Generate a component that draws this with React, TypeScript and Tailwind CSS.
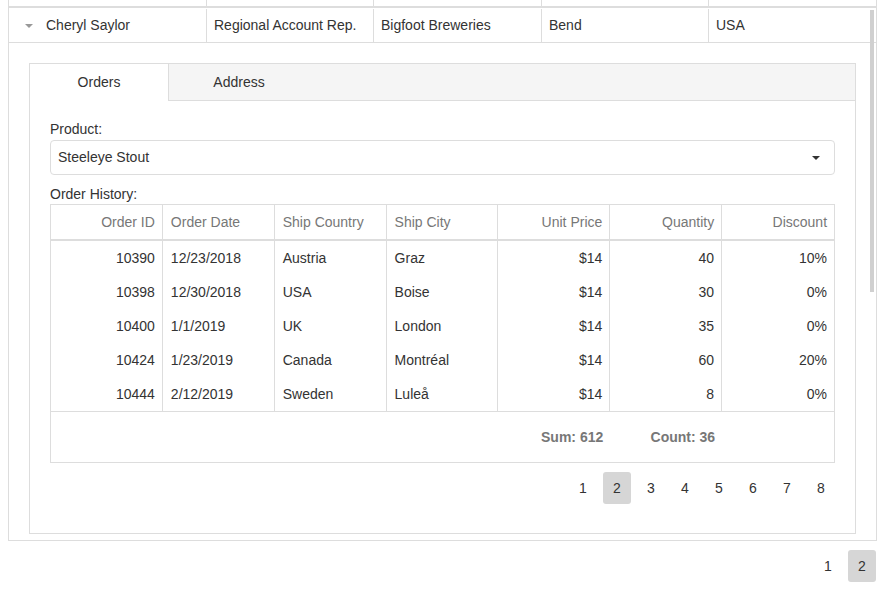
import React from "react";

const rows = [
  ["10390", "12/23/2018", "Austria", "Graz", "$14", "40", "10%"],
  ["10398", "12/30/2018", "USA", "Boise", "$14", "30", "0%"],
  ["10400", "1/1/2019", "UK", "London", "$14", "35", "0%"],
  ["10424", "1/23/2019", "Canada", "Montréal", "$14", "60", "20%"],
  ["10444", "2/12/2019", "Sweden", "Luleå", "$14", "8", "0%"],
];
const headers = ["Order ID", "Order Date", "Ship Country", "Ship City", "Unit Price", "Quantity", "Discount"];
const rightCols = [true, false, false, false, true, true, true];

export default function App() {
  return (
    <div className="relative w-[885px] h-[600px] bg-white text-[14px] text-[#333]" style={{ fontFamily: '"Liberation Sans", Arial, sans-serif' }}>
      <div className="ml-[8px] w-[869px] border-x border-[#ddd] border-b">
        {/* header row (cut off) */}
        <div className="flex h-[8px] border-b-2 border-[#ddd]">
          <div className="w-[198px] border-r border-[#ddd]" />
          <div className="w-[167px] border-r border-[#ddd]" />
          <div className="w-[168px] border-r border-[#ddd]" />
          <div className="w-[167px] border-r border-[#ddd]" />
          <div className="flex-1" />
        </div>
        {/* data row */}
        <div className="flex h-[35px] border-b border-[#ddd] items-stretch pt-px">
          <div className="w-[198px] border-r border-[#ddd] flex items-center">
            <div className="w-[37px] flex justify-center pl-[2px]">
              <div className="w-0 h-0 border-l-[4px] border-r-[4px] border-t-[4px] border-l-transparent border-r-transparent border-t-[#999]" />
            </div>
            <span>Cheryl Saylor</span>
          </div>
          <div className="w-[167px] border-r border-[#ddd] flex items-center px-[7px]">Regional Account Rep.</div>
          <div className="w-[168px] border-r border-[#ddd] flex items-center px-[7px]">Bigfoot Breweries</div>
          <div className="w-[167px] border-r border-[#ddd] flex items-center px-[7px]">Bend</div>
          <div className="flex-1 flex items-center px-[7px]">USA</div>
        </div>
        {/* detail row */}
        <div className="pt-[20px] pb-[6px] px-[20px]">
          <div className="border border-[#ddd] w-[827px]">
            <div className="flex h-[37px] bg-[#f5f5f5] border-b border-[#ddd]">
              <div className="w-[139px] bg-white border-r border-[#ddd] -mb-px flex items-center justify-center">Orders</div>
              <div className="w-[140px] flex items-center justify-center">Address</div>
            </div>
            <div className="px-[20px] pt-[20px] pb-[29px]">
              <div className="leading-[16px]">Product:</div>
              <div className="mt-[3px] h-[35px] border border-[#ddd] rounded-[4px] flex items-center justify-between pl-[7px] pr-[14px]">
                <span>Steeleye Stout</span>
                <div className="w-0 h-0 border-l-[4px] border-r-[4px] border-t-[4px] border-l-transparent border-r-transparent border-t-[#333]" />
              </div>
              <div className="mt-[11px] leading-[16px]">Order History:</div>
              <div className="mt-[2px] border border-[#ddd] w-[785px]">
                <div className="flex h-[36px] border-b-2 border-[#ddd] text-[#777]">
                  {headers.map((h, i) => (
                    <div key={h} className={`w-[112px] flex items-center px-[7px] ${i < 6 ? "border-r border-[#ddd]" : ""} ${rightCols[i] ? "justify-end" : "justify-start pl-[8px]"}`}>{h}</div>
                  ))}
                </div>
                {rows.map((r, ri) => (
                  <div key={ri} className="flex h-[34px]">
                    {r.map((c, i) => (
                      <div key={i} className={`w-[112px] flex items-center px-[7px] ${i < 6 ? "border-r border-[#ddd]" : ""} ${rightCols[i] ? "justify-end" : "justify-start pl-[8px]"}`}>{c}</div>
                    ))}
                  </div>
                ))}
                <div className="flex h-[51px] border-t border-[#ddd] font-bold text-[#777]">
                  <div className="w-[448px]" />
                  <div className="w-[112px] flex items-center justify-end px-[7px]">Sum: 612</div>
                  <div className="w-[112px] flex items-center justify-end px-[7px]">Count: 36</div>
                  <div className="w-[112px]" />
                </div>
              </div>
              <div className="mt-[9px] flex justify-end gap-[6px]">
                {["1", "2", "3", "4", "5", "6", "7", "8"].map((p) => (
                  <div key={p} className={`w-[28px] h-[32px] flex items-center justify-center rounded-[3px] ${p === "2" ? "bg-[#d6d6d6]" : ""}`}>{p}</div>
                ))}
              </div>
            </div>
          </div>
        </div>
      </div>
      <div className="mt-[9px] ml-[8px] w-[868px] flex justify-end gap-[6px]">
        {["1", "2"].map((p) => (
          <div key={p} className={`w-[28px] h-[32px] flex items-center justify-center rounded-[3px] ${p === "2" ? "bg-[#d6d6d6]" : ""}`}>{p}</div>
        ))}
      </div>
      <div className="absolute left-[870px] top-[10px] w-[4px] h-[282px] bg-[#d0d0d0]" />
    </div>
  );
}
